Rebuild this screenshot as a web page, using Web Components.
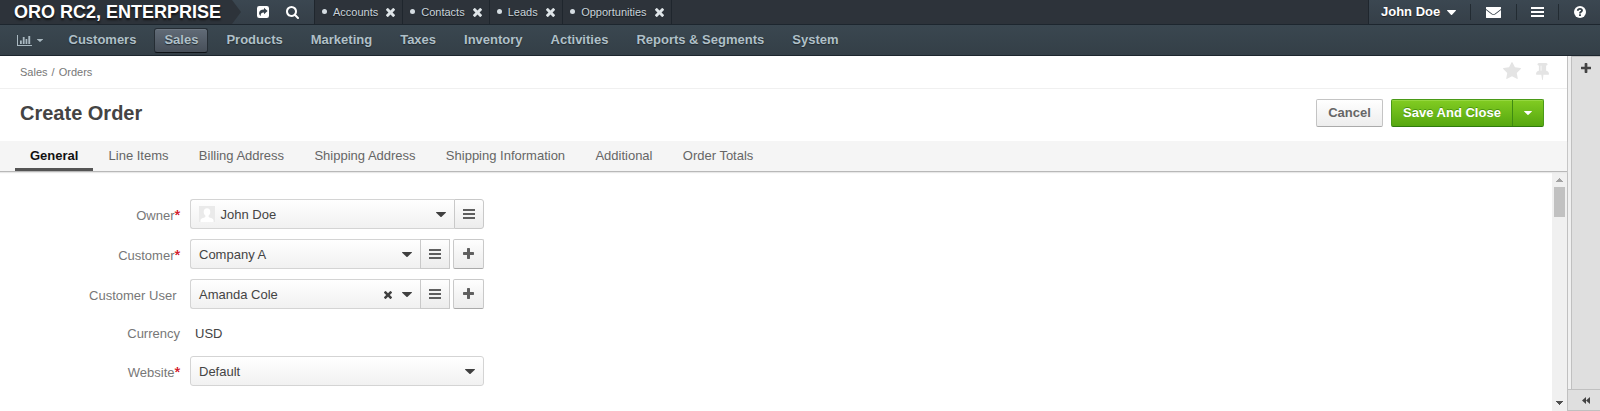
<!DOCTYPE html>
<html lang="en">
<head>
<meta charset="utf-8">
<title>Create Order</title>
<style>
html,body{margin:0;height:100%;overflow:hidden;background:#fff}
body{font:13px/20px "Liberation Sans",Arial,sans-serif;color:#444}
</style>
</head>
<body>
<order-page></order-page>
<script>
const define = (name, html, setup) => {
  const t = document.createElement('template');
  t.innerHTML = '<style>*{box-sizing:border-box}:host{box-sizing:border-box}</style>' + html;
  customElements.define(name, class extends HTMLElement {
    constructor() {
      super();
      this.attachShadow({mode: 'open'}).append(t.content.cloneNode(true));
    }
    connectedCallback() { if (setup) setup(this, this.shadowRoot); }
  });
};

const ICONS = {
  share: [12, 12, '<path fill-rule="evenodd" d="M2.2 0h7.6Q12 0 12 2.2v7.6Q12 12 9.800 12H2.200Q0 12 0 9.800V2.200Q0 0 2.200 0zM7 1.800V3.500C3.800 3.600 2.100 5 2.100 7.200c0 1.200.6 2.100 1.700 2.900-.5-2 .4-3.500 3.200-3.600v1.700L10.600 5z"/>'],
  search: [1664, 1664, '<path transform="translate(-64 -128)" d="M1216 832q0-185-131.500-316.500t-316.500-131.500-316.500 131.500-131.500 316.500 131.500 316.500 316.500 131.500 316.500-131.500 131.500-316.500zm512 832q0 52-38 90t-90 38q-54 0-90-38l-343-342q-179 124-399 124-143 0-273.500-55.500t-225-150-150-225-55.500-273.500 55.500-273.500 150-225 225-150 273.500-55.500 273.500 55.500 225 150 150 225 55.500 273.500q0 220-124 399l343 343q37 37 37 90z"/>'],
  times: [1188, 1188, '<path transform="translate(-302 -366)" d="M1490 1322q0 40-28 68l-136 136q-28 28-68 28t-68-28l-294-294-294 294q-28 28-68 28t-68-28l-136-136q-28-28-28-68t28-68l294-294-294-294q-28-28-28-68t28-68l136-136q28-28 68-28t68 28l294 294 294-294q28-28 68-28t68 28l136 136q28 28 28 68t-28 68l-294 294 294 294q28 28 28 68z"/>'],
  plus: [1408, 1408, '<path transform="translate(-192 -128)" d="M1600 736v192q0 40-28 68t-68 28h-416v416q0 40-28 68t-68 28h-192q-40 0-68-28t-28-68v-416h-416q-40 0-68-28t-28-68v-192q0-40 28-68t68-28h416v-416q0-40 28-68t68-28h192q40 0 68 28t28 68v416h416q40 0 68 28t28 68z"/>'],
  star: [1664, 1587, '<path transform="translate(-64 -32)" d="M1728 647q0 22-26 48l-363 354 86 500q1 7 1 20 0 21-10.500 35.500t-30.500 14.500q-19 0-40-12l-449-236-449 236q-22 12-40 12-21 0-31.500-14.500t-10.500-35.500q0-6 2-20l86-500-364-354q-25-27-25-48 0-37 56-46l502-73 225-455q19-41 49-41t49 41l225 455 502 73q56 9 56 46z"/>'],
  pin: [1152, 1664, '<path transform="translate(-320 -128)" d="M800 864v-448q0-14-9-23t-23-9-23 9-9 23v448q0 14 9 23t23 9 23-9 9-23zm672 352q0 26-19 45t-45 19h-429l-51 483q-2 12-10.500 20.500t-20.500 8.500h-1q-27 0-32-27l-76-485h-404q-26 0-45-19t-19-45q0-123 78.500-221.500t177.500-98.500v-512q-52 0-90-38t-38-90 38-90 90-38h640q52 0 90 38t38 90-38 90-90 38v512q99 0 177.500 98.500t78.500 221.500z"/>'],
  mail: [15, 11, '<path d="M.3 0h14.400q.3 0 .3.300v1.700L8.800 6.700q-1.300 1-2.600 0L0 2V.300Q0 0 .300 0z"/><path d="M0 3l5.500 4.300q2 1.400 4 0L15 3v7.600q0 .4-.4.400H.4q-.4 0-.4-.4z"/>'],
  bars: [12, 10, '<path d="M0 0h12v2H0zM0 4h12v2H0zM0 8h12v2H0z"/>'],
  caret: [10, 5, '<path d="M.4 0h9.200q.6.200.2.700L5.600 4.700q-.6.500-1.200 0L.2.700Q-.2.200.400 0z"/>'],
  chart: [15, 11, '<path d="M0 0h1v10h14v1H0zM3 5.500h1.800V9H3zM5.800 2h1.800v7H5.800zM8.600 4h1.700v5H8.600zM11.300 1h1.900v8h-1.900z"/>'],
  help: [12, 12, '<circle cx="6" cy="6" r="6"/><path fill="none" stroke="#364149" stroke-width="1.900" d="M3.800 4.700C3.900 2.300 8.100 2.300 8 4.500c0 1.400-2 1.300-2 2.900M6 8.200v1.700"/>'],
  rewind: [8, 7, '<path d="M4 0v7L0 3.500zM8 0v7L4 3.500z"/>'],
  up: [7, 4, '<path d="M3 0h1v1h1v1h1v1h1v1H0V3h1V2h1V1h1z"/>'],
  down: [7, 4, '<path d="M0 0h7v1H6v1H5v1H4v1H3V3H2V2H1V1H0z"/>'],
  avatar: [16, 16, '<path fill="#eaeaea" d="M0 0h16v16H0z"/><path fill="#fff" d="M8 2.200c2.100 0 3.400 1.500 3.300 3.700-.1 1.800-.8 3-1.700 3.700v1.200c.4 1.100 4.400 1 4.900 3.200V16h-13v-2c.5-2.200 4.500-2.100 4.900-3.200V9.600C5.500 8.900 4.800 7.700 4.700 5.900 4.600 3.700 5.900 2.200 8 2.200z"/>']
};

define('ui-icon', `<style>:host{display:block;flex:none;line-height:0}svg{display:block;fill:currentColor}</style><svg preserveAspectRatio="none"></svg>`,
  (el, r) => {
    const [w, h, d] = ICONS[el.getAttribute('name')];
    const s = r.querySelector('svg');
    s.setAttribute('viewBox', `0 0 ${w} ${h}`);
    s.setAttribute('width', el.getAttribute('w') || w);
    s.setAttribute('height', el.getAttribute('h') || h);
    s.innerHTML = d;
  });

define('page-pill', `<style>
:host{display:flex;align-items:center;height:24px;padding:0 7px 0 7px;border-right:1px solid #1f262d;font-size:11px;color:#c9d3da;text-shadow:0 1px 1px #14181c}
i{width:5px;height:5px;border-radius:50%;background:#d5dde2;margin:-1px 6px 0 0}
ui-icon{margin:1px 0 0 8px;color:#dfe5e8}
</style><i></i><slot></slot><ui-icon name="times" w="9" h="9"></ui-icon>`);

define('top-bar', `<style>
:host{display:flex;height:25px;border-bottom:1px solid #1d262e;background:#2d333a;color:#fff}
.brand{display:flex;width:315px;height:24px;background:linear-gradient(#3b4751,#353f48);border-right:1px solid #1f262d;align-items:center}
.logo{width:241px;height:24px;padding-left:14px;background:#2d333a;clip-path:polygon(0 0,232px 0,100% 50%,232px 100%,0 100%);font:bold 18px/24px "Liberation Sans",Arial,sans-serif;white-space:nowrap;text-shadow:0 2px 2px #111}
.user{margin-left:auto;width:232px;background:linear-gradient(#3b4751,#353f48);border-left:1px solid #1f262d;display:flex;align-items:center;font-weight:bold;padding-left:12px;text-shadow:0 1px 1px #222}
b{width:1px;height:16px;background:#222b32}
</style>
<div class="brand"><div class="logo">ORO RC2, ENTERPRISE</div><ui-icon name="share" style="margin-left:16px"></ui-icon><ui-icon name="search" w="13" h="13" style="margin:1px 0 0 16.500px"></ui-icon></div>
<page-pill>Accounts</page-pill><page-pill>Contacts</page-pill><page-pill>Leads</page-pill><page-pill style="padding-left:7.500px">Opportunities</page-pill>
<div class="user"><span style="width:59px;white-space:nowrap">John Doe</span><ui-icon name="caret" w="9" h="5" style="margin-left:6.500px"></ui-icon><b style="margin-left:14.500px"></b>
<ui-icon name="mail" style="margin:1px 15px 0 14.500px"></ui-icon><b></b><ui-icon name="bars" w="13" h="10" style="margin:0 14.500px 0 14px"></ui-icon><b></b><ui-icon name="help" style="margin:-1px 0 0 14.500px"></ui-icon></div>`);

define('nav-item', `<style>
:host{display:block;height:25px;padding:0 9px;border:1px solid transparent;border-radius:3px;margin-right:8px;font-weight:bold;line-height:22px;color:#b0c0c8;text-shadow:0 1px 1px #20282e;white-space:nowrap}
:host([active]){background:linear-gradient(#616b77,#474f59);border-color:#252d34;border-bottom-color:#0e1216;box-shadow:inset 0 1px #6b7580}
</style><slot></slot>`);

define('main-nav', `<style>
:host{display:flex;height:31px;background:linear-gradient(#3a4750,#343f47);border-bottom:1px solid #1d262e;padding:3px 0 0 17px;color:#aab9c1}
ui-icon{margin-top:7px}
</style><ui-icon name="chart"></ui-icon><ui-icon name="caret" w="6" h="3" style="margin:11px 15.500px 0 5px"></ui-icon>
<nav-item>Customers</nav-item><nav-item active>Sales</nav-item><nav-item>Products</nav-item><nav-item>Marketing</nav-item><nav-item>Taxes</nav-item><nav-item>Inventory</nav-item><nav-item>Activities</nav-item><nav-item>Reports &amp; Segments</nav-item><nav-item>System</nav-item>`);

define('page-head', `<style>
:host{display:block}
.crumbs{display:flex;height:33px;border-bottom:1px solid #f0f0f0;padding:0 18px 0 20px;align-items:center;font-size:11px;color:#777}
.crumbs span{margin-right:auto;word-spacing:1px}
ui-icon{color:#e4e4e4}
.title{display:flex;height:52px;padding:10px 23px 0 20px}
h1{font:bold 20px/28px "Liberation Sans",Arial,sans-serif;margin:0 auto 0 0;color:#444;padding-top:0}
.btn{height:28px;border:1px solid #c4c4c4;border-bottom-color:#aaa;border-radius:2px;background:linear-gradient(#fff,#ededed);font-weight:bold;line-height:26px;text-align:center;color:#666;width:67px}
.save{margin-left:8px;display:flex;width:153px;color:#fff;background:linear-gradient(#82cc22,#56a70f);border-color:#4a9a17;border-bottom-color:#2e7a0c;text-shadow:0 -1px #4b9510;box-shadow:inset 0 1px #95d740}
.save span{width:121px;border-right:1px solid #3f8b12}
.save ui-icon{color:#fff;margin:11px 0 0 11px}
</style>
<div class="crumbs"><span>Sales / Orders</span><ui-icon name="star" w="18" h="17" style="margin:-3px 15px 0 0"></ui-icon><ui-icon name="pin" w="13" h="17" style="margin-top:-2px"></ui-icon></div>
<div class="title"><h1>Create Order</h1><div class="btn">Cancel</div><div class="btn save"><span>Save And Close</span><ui-icon name="caret" w="8" h="4"></ui-icon></div></div>`);

define('tab-item', `<style>
:host{display:block;height:30px;padding:0 15.150px;line-height:29px;color:#666;white-space:nowrap}
:host([active]){font-weight:bold;color:#111;border-bottom:3px solid #555;padding:0 15px}
</style><slot></slot>`);

define('tab-strip', `<style>:host{display:flex;height:31px;padding-left:15px;background:#f5f5f5;border-bottom:1px solid #b8b8b8;box-shadow:0 1px 1px #e8e8e8;position:relative}</style><slot></slot>`);

define('form-row', `<style>
:host{display:flex;height:30px;margin-bottom:10px}
label{width:180px;text-align:right;line-height:33px;margin-right:10px;color:#777;white-space:nowrap}
label em{font-style:normal;color:#d41c2c;font-size:15px;line-height:14px;display:inline-block;width:5.500px;height:14px;text-shadow:0 0 .5px #d41c2c}
</style><label></label><slot></slot>`, (el, r) => {
  const l = r.querySelector('label');
  l.textContent = el.getAttribute('label');
  if (el.hasAttribute('required')) { const e = document.createElement('em'); e.textContent = '*'; l.append(e); }
});

define('select-box', `<style>
:host{display:flex;align-items:center;height:30px;padding:0 8px;border:1px solid #d4d4d4;border-radius:3px;background:linear-gradient(#fff,#f1f1f1);color:#444;line-height:28px}
:host([joined]){border-radius:3px 0 0 3px;border-right:0}
.v{display:flex;align-items:center;margin-right:auto;padding-top:2px}
ui-icon{color:#404040}
</style><span class="v"><slot></slot></span><slot name="clear"></slot><ui-icon name="caret" w="10" h="5" style="margin-top:1px"></ui-icon>`);

define('icon-button', `<style>
:host{display:flex;align-items:center;justify-content:center;width:30px;height:30px;border:1px solid #c9c9c9;background:linear-gradient(#fefefe,#ececec);color:#5f5f5f}
:host([end]){border-radius:0 3px 3px 0}
:host([add]){margin-left:3px;width:31px;border-radius:2px;border-bottom-color:#aaa}
</style><slot></slot>`);

define('order-form', `<style>
:host{display:flex;flex:1;min-height:0}
.fields{flex:1;padding-top:27px}
.usd{margin:0 0 0 5px;line-height:33px}
.bar{width:15px;background:#f0f0f0;display:flex;flex-direction:column;align-items:center;padding:6px 0}
.thumb{width:11px;height:30px;background:#c1c1c1;margin:5px 0 auto}
</style>
<div class="fields">
<form-row label="Owner" required><select-box joined style="width:264px"><ui-icon name="avatar" style="margin:-2px 5.500px 0 0"></ui-icon>John Doe</select-box><icon-button end><ui-icon name="bars" w="12" h="10"></ui-icon></icon-button></form-row>
<form-row label="Customer" required><select-box joined style="width:230px">Company A</select-box><icon-button><ui-icon name="bars" w="12" h="10"></ui-icon></icon-button><icon-button add><ui-icon name="plus" w="11" h="11" style="margin-top:-1px"></ui-icon></icon-button></form-row>
<form-row label="Customer User" style="margin-left:-3.500px"><select-box joined style="width:230px;margin-left:3.500px">Amanda Cole<ui-icon slot="clear" name="times" w="8" h="8" style="margin:1px 10px 0 0;color:#404040"></ui-icon></select-box><icon-button><ui-icon name="bars" w="12" h="10"></ui-icon></icon-button><icon-button add><ui-icon name="plus" w="11" h="11" style="margin-top:-1px"></ui-icon></icon-button></form-row>
<form-row label="Currency" style="margin:-2px 0 9px"><span class="usd">USD</span></form-row>
<form-row label="Website" required><select-box style="width:294px">Default</select-box></form-row>
</div>
<div class="bar"><ui-icon name="up" style="color:#a3a3a3"></ui-icon><div class="thumb"></div><ui-icon name="down" style="color:#505050"></ui-icon></div>`);

define('side-panel', `<style>
:host{display:flex;flex-direction:column;width:33px}
.body{flex:1;border-left:1px solid #c0c0c0;background:#f0f0f0;display:flex;padding-left:3px}
.col{flex:1;border-left:1px solid #c0c0c0;border-top:1px solid #c0c0c0;background:#dfdfdf;display:flex;justify-content:center;padding-top:6px;color:#444}
.foot{height:22px;border:solid #c0c0c0;border-width:1px 0 1px 1px;background:#dfdfdf;display:flex;justify-content:center;align-items:center;padding-left:4px;color:#444}
</style><div class="body"><div class="col"><ui-icon name="plus" w="10" h="10"></ui-icon></div></div><div class="foot"><ui-icon name="rewind"></ui-icon></div>`);

define('order-page', `<style>
:host{display:flex;flex-direction:column;width:1600px;height:411px}
.work{display:flex;flex:1;min-height:0}
main{flex:1;display:flex;flex-direction:column;min-width:0}
</style><top-bar></top-bar><main-nav></main-nav>
<div class="work"><main><page-head></page-head>
<tab-strip><tab-item active>General</tab-item><tab-item>Line Items</tab-item><tab-item>Billing Address</tab-item><tab-item>Shipping Address</tab-item><tab-item>Shipping Information</tab-item><tab-item>Additional</tab-item><tab-item>Order Totals</tab-item></tab-strip>
<order-form></order-form></main><side-panel></side-panel></div>`);
</script>
</body>
</html>
